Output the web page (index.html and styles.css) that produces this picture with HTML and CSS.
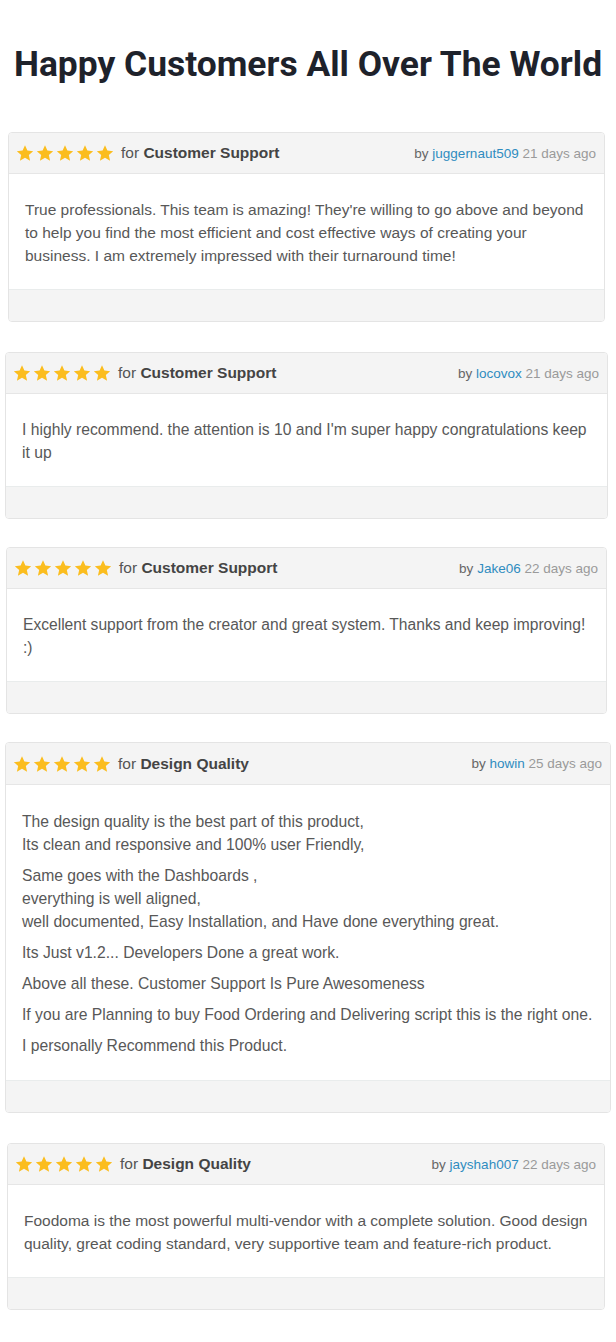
FILE: index.html
```html
<!DOCTYPE html>
<html lang="en">
<head>
<meta charset="utf-8">
<title>Happy Customers All Over The World</title>
<link rel="stylesheet" href="styles.css">
</head>
<body>
<svg width="0" height="0" class="defs" aria-hidden="true">
  <defs>
    <symbol id="star" viewBox="0 0 24 24">
      <path d="M12 1.6l3.2 7.1 7.7.8-5.8 5.2 1.7 7.6L12 18.4l-6.8 3.9 1.7-7.6-5.8-5.2 7.7-.8z"/>
    </symbol>
  </defs>
</svg>
<main class="page">
  <h1 class="title">Happy Customers All Over The World</h1>

  <section class="reviews">
    <article class="review r1">
      <header class="review-head">
        <div class="rating">
          <span class="stars"><svg><use href="#star"/></svg><svg><use href="#star"/></svg><svg><use href="#star"/></svg><svg><use href="#star"/></svg><svg><use href="#star"/></svg></span>
          <span class="for">for <b>Customer Support</b></span>
        </div>
        <div class="meta">by <a class="user">juggernaut509</a> <span class="ago">21 days ago</span></div>
      </header>
      <div class="review-body">
        <p>True professionals. This team is amazing! They're willing to go above and beyond to help you find the most efficient and cost effective ways of creating your business. I am extremely impressed with their turnaround time!</p>
      </div>
      <footer class="review-foot"></footer>
    </article>

    <article class="review r2">
      <header class="review-head">
        <div class="rating">
          <span class="stars"><svg><use href="#star"/></svg><svg><use href="#star"/></svg><svg><use href="#star"/></svg><svg><use href="#star"/></svg><svg><use href="#star"/></svg></span>
          <span class="for">for <b>Customer Support</b></span>
        </div>
        <div class="meta">by <a class="user">locovox</a> <span class="ago">21 days ago</span></div>
      </header>
      <div class="review-body">
        <p>I highly recommend. the attention is 10 and I'm super happy congratulations keep it up</p>
      </div>
      <footer class="review-foot"></footer>
    </article>

    <article class="review r3">
      <header class="review-head">
        <div class="rating">
          <span class="stars"><svg><use href="#star"/></svg><svg><use href="#star"/></svg><svg><use href="#star"/></svg><svg><use href="#star"/></svg><svg><use href="#star"/></svg></span>
          <span class="for">for <b>Customer Support</b></span>
        </div>
        <div class="meta">by <a class="user">Jake06</a> <span class="ago">22 days ago</span></div>
      </header>
      <div class="review-body">
        <p>Excellent support from the creator and great system. Thanks and keep improving! :)</p>
      </div>
      <footer class="review-foot"></footer>
    </article>

    <article class="review r4">
      <header class="review-head">
        <div class="rating">
          <span class="stars"><svg><use href="#star"/></svg><svg><use href="#star"/></svg><svg><use href="#star"/></svg><svg><use href="#star"/></svg><svg><use href="#star"/></svg></span>
          <span class="for">for <b>Design Quality</b></span>
        </div>
        <div class="meta">by <a class="user">howin</a> <span class="ago">25 days ago</span></div>
      </header>
      <div class="review-body">
        <p>The design quality is the best part of this product,<br>Its clean and responsive and 100% user Friendly,</p>
        <p>Same goes with the Dashboards ,<br>everything is well aligned,<br>well documented, Easy Installation, and Have done everything great.</p>
        <p>Its Just v1.2... Developers Done a great work.</p>
        <p>Above all these. Customer Support Is Pure Awesomeness</p>
        <p>If you are Planning to buy Food Ordering and Delivering script this is the right one.</p>
        <p>I personally Recommend this Product.</p>
      </div>
      <footer class="review-foot"></footer>
    </article>

    <article class="review r5">
      <header class="review-head">
        <div class="rating">
          <span class="stars"><svg><use href="#star"/></svg><svg><use href="#star"/></svg><svg><use href="#star"/></svg><svg><use href="#star"/></svg><svg><use href="#star"/></svg></span>
          <span class="for">for <b>Design Quality</b></span>
        </div>
        <div class="meta">by <a class="user">jayshah007</a> <span class="ago">22 days ago</span></div>
      </header>
      <div class="review-body">
        <p>Foodoma is the most powerful multi-vendor with a complete solution. Good design quality, great coding standard, very supportive team and feature-rich product.</p>
      </div>
      <footer class="review-foot"></footer>
    </article>
  </section>
</main>
</body>
</html>
```

FILE: styles.css
```css
* { box-sizing: border-box; }

html, body {
  margin: 0;
  padding: 0;
  background: #ffffff;
}

.defs {
  position: absolute;
  width: 0;
  height: 0;
  overflow: hidden;
}

.page {
  width: 616px;
  padding: 0 0 34px;
}

.title {
  margin: 0;
  padding: 42px 0 0;
  height: 132px;
  font-family: Roboto, "Liberation Sans", Arial, sans-serif;
  font-weight: 700;
  font-size: 35.4px;
  line-height: 44px;
  color: #1e222b;
  text-align: center;
}

.reviews {
  display: flex;
  flex-direction: column;
  gap: 28px;
}

.review {
  border: 1px solid #e4e4e4;
  border-radius: 4px;
  background: #ffffff;
  font-family: "Liberation Sans", Arial, sans-serif;
  overflow: hidden;
}

.r1 { margin: 0 11px 0 8px; }
.r2 { margin: 2px 8px 0 5px; }
.r2 .review-body { font-size: 15.7px; padding-right: 16px; }
.r3 { margin: 0 9px 0 6px; }
.r3 .review-body { font-size: 15.6px; }
.r4 { margin: 0 5px 0 5px; }
.r4 .review-head { height: 42px; }
.r4 .review-body { font-size: 15.7px; padding: 25px 10px 23px 16px; }
.r5 { margin: 2px 11px 0 7px; }
.r5 .review-body { padding-right: 12px; }

.review-head {
  height: 41px;
  background: #f4f4f4;
  border-bottom: 1px solid #e6e6e6;
  display: flex;
  align-items: center;
  justify-content: space-between;
  padding: 0 8px 0 7px;
}

.rating {
  display: flex;
  align-items: center;
  gap: 7px;
}

.stars {
  display: flex;
  gap: 2px;
}

.stars svg {
  width: 18px;
  height: 18px;
  fill: #fbbd1e;
  display: block;
}

.for {
  font-size: 15.5px;
  color: #555555;
}

.for b {
  color: #444444;
  font-weight: 700;
}

.meta {
  font-size: 13.5px;
  color: #666666;
}

.user {
  color: #2f8cc0;
  text-decoration: none;
}

.ago {
  color: #9a9a9a;
}

.review-body {
  padding: 24px 14px 22px 16px;
  font-size: 15.5px;
  line-height: 23px;
  color: #585858;
}

.review-body p {
  margin: 0;
}

.review-body p + p {
  margin-top: 8px;
}

.review-foot {
  height: 32px;
  background: #f4f4f4;
  border-top: 1px solid #e9ecec;
}
```
